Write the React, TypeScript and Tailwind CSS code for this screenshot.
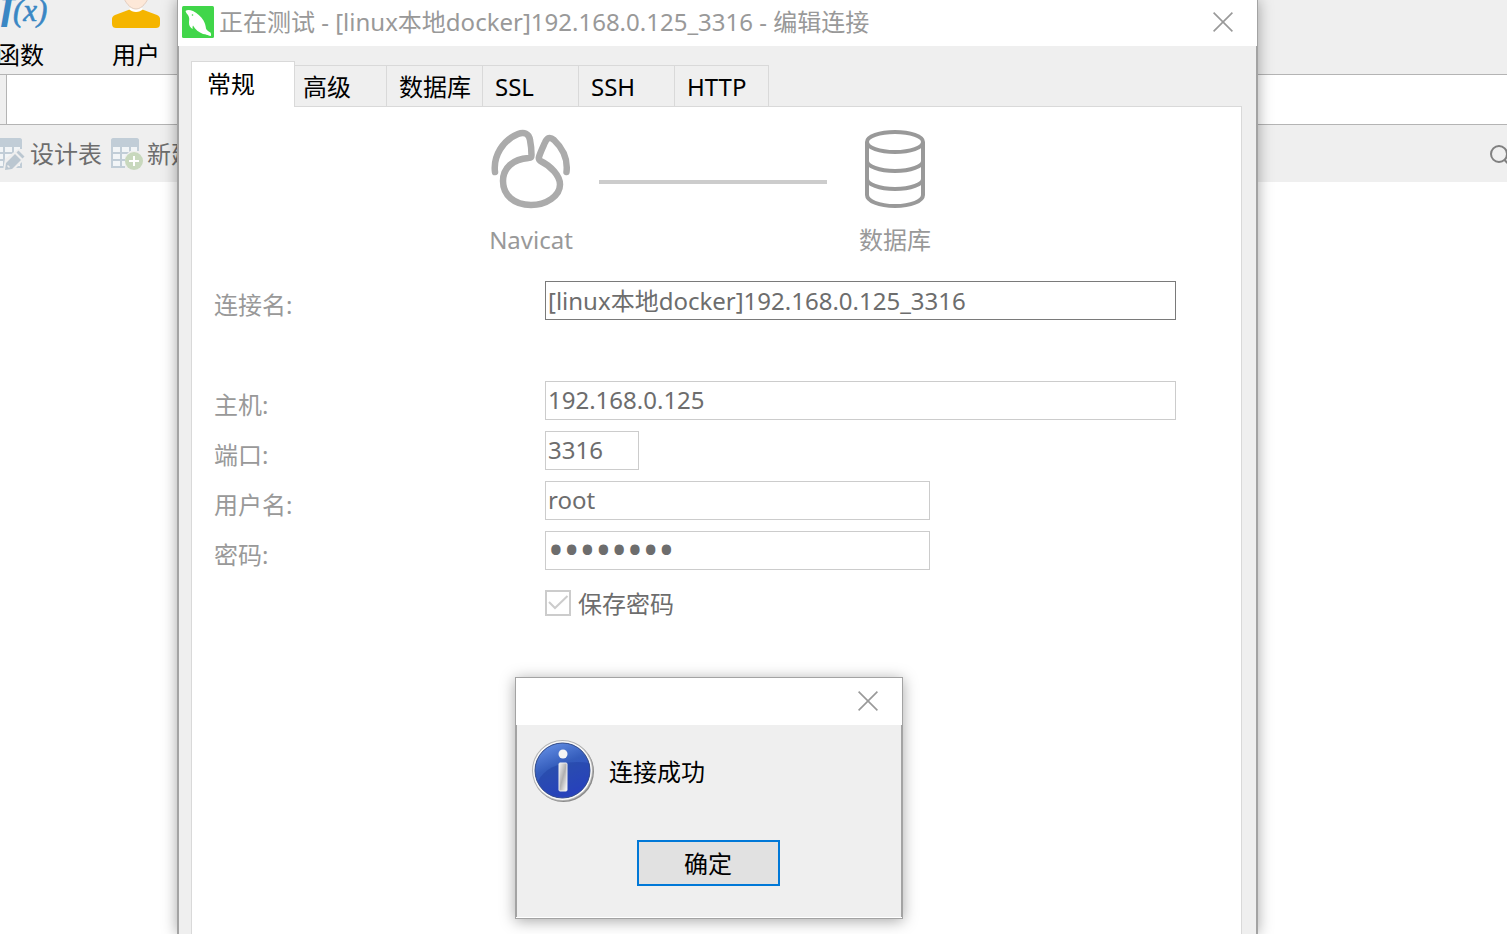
import { useState } from 'react';

interface Field {
  id: string;
  label: string;
  value: string;
  type?: 'text' | 'password';
  inputClass: string;
  rowClass?: string;
}

const TABS = [
  { name: '高级', width: 'w-24' },
  { name: '数据库', width: 'w-24' },
  { name: 'SSL', width: 'w-24' },
  { name: 'SSH', width: 'w-24' },
  { name: 'HTTP', width: 'w-[94px]' },
];

const FIELDS: Field[] = [
  { id: 'name', label: '连接名:', value: '[linux本地docker]192.168.0.125_3316', inputClass: 'flex-1 border-[#7a7a7a]', rowClass: 'mb-[50px]' },
  { id: 'host', label: '主机:', value: '192.168.0.125', inputClass: 'flex-1 border-[#cccccc]' },
  { id: 'port', label: '端口:', value: '3316', inputClass: 'w-[94px] border-[#cccccc]' },
  { id: 'user', label: '用户名:', value: 'root', inputClass: 'w-[385px] border-[#cccccc]' },
  { id: 'password', label: '密码:', value: 'password', type: 'password', inputClass: 'w-[385px] border-[#cccccc] text-[42px]' },
];

function CloseIcon() {
  return (
    <svg className="h-5 w-5" viewBox="0 0 20 20" fill="none" stroke="#999999" strokeWidth="1.6">
      <path d="M.6.6l18.8 18.8M19.4.6L.6 19.4" />
    </svg>
  );
}

function AppLogo() {
  return (
    <svg className="h-8 w-8 shrink-0" viewBox="0 0 32 32">
      <rect width="32" height="32" rx="1.5" fill="#41d64a" />
      <path d="M3.500 5C5 3.500 8 3.800 11 5c4 2 8 5.500 10.500 9.500 1.500 2.500 2 5 2.500 8 .6 1.700 2.500 3 4.500 4 .3.800.3 2-.3 3-2.200-.8-4.700-1.200-7.200-1.500-4-1.500-8-4.500-10-8.500-.5 1-.6 2.200-.2 3.500C8.500 22 6.800 19.500 7 16.500c0-1.500.3-2.500.2-4-.2-2-1-3.500-2.200-4.500-.6-1-1.200-2-1.500-3z" fill="#fff" />
      <path d="M21 26.500l8 1v2.500c-3-.4-5.500-1.500-8-3.500z" fill="#fff" />
      <circle cx="10.500" cy="9" r=".8" fill="#41d64a" />
    </svg>
  );
}

function FunctionIcon() {
  return (
    <svg className="h-[30px] w-12 overflow-visible" viewBox="0 0 48 30" fill="#3a87c4" fontFamily="'Liberation Serif', serif" fontStyle="italic">
      <text x="5" y="18" fontSize="44" fontWeight="bold">f</text>
      <text x="17" y="21" fontSize="31" stroke="#3a87c4" strokeWidth=".6">(x)</text>
    </svg>
  );
}

function UserIcon() {
  return (
    <svg className="h-[30px] w-12 overflow-visible" viewBox="0 0 48 30">
      <path d="M0 24v-5c0-2 1-3 3-4L19 9h10l16 6c2 1 3 2 3 4v5c0 3-2 4-4 4H4c-2 0-4-1-4-4z" fill="#f5b500" />
      <path d="M17 9c3 4 11 4 14 0l-2-2H19z" fill="#fff" />
      <path d="M11-4c2 6 7 13 13 13S35 2 37-4z" fill="#fde8d8" stroke="#e2cdbf" />
    </svg>
  );
}

function TableIcon({ children }: { children: React.ReactNode }) {
  return (
    <svg className="h-8 w-8 shrink-0" viewBox="0 0 32 32">
      <path d="M0 30V2c0-1 1-2 2-2h24c1 0 2 1 2 2v28z" fill="#c1cdd7" />
      <path d="M2 9h7v5H2zM11 9h7v5h-7zM20 9h6v5h-6zM2 16h7v5H2zM11 16h7v5h-7zM20 16h6v5h-6zM2 23h7v5H2zM11 23h7v5h-7zM20 23h6v5h-6z" fill="#f2f5f7" />
      {children}
    </svg>
  );
}

function DesignTableIcon() {
  return (
    <TableIcon>
      <path d="M9 32l2-11L24 11h8v9L20 32z" fill="#efefef" />
      <path d="M11 32l1-7 9-9 6 6-9 9zM22.500 14.500l2-2 6 6-2 2z" fill="#bbc7d1" />
      <path d="M13.500 27.500l2 2" stroke="#efefef" strokeWidth="1.500" />
    </TableIcon>
  );
}

function NewTableIcon() {
  return (
    <TableIcon>
      <path d="M14 31V18l5-5h10v18z" fill="#efefef" />
      <circle cx="23" cy="23" r="9" fill="#c8d8bd" />
      <path d="M18 23h10M23 18v10" stroke="#fff" strokeWidth="2" />
    </TableIcon>
  );
}

function NavicatIcon() {
  return (
    <svg className="h-20 w-20 overflow-visible" viewBox="0 0 80 80" fill="none" stroke="#ababab" strokeWidth="6.500" strokeLinecap="round" strokeLinejoin="round">
      <path d="M4 43C2 27 12 11 27 5c6-2.500 11-.5 12 6 1 5 1.500 10 1.500 15 0 2-.5 3-3 3C22 30 12 39 12 52c0 14 11 24 28 24 15 0 29-9 29-20.500C69 47 60 37 49.500 32c-1.500-1-2-2-1.500-4 1.500-5 3.500-9 6-14.500 2-5 5-6 9-2.500 8.500 8 14 19 12.500 32" />
    </svg>
  );
}

function DatabaseIcon() {
  return (
    <svg className="h-20 w-[60px]" viewBox="0 0 60 80" fill="none" stroke="#999999" strokeWidth="4">
      <ellipse cx="30" cy="13" rx="28" ry="10" />
      <path d="M2 13v53c0 6 12 11 28 11s28-5 28-11V13M2 32c0 5 12 10 28 10s28-5 28-10M2 50c0 5 12 10 28 10s28-5 28-10" />
    </svg>
  );
}

function InfoIcon() {
  return (
    <svg className="h-16 w-16 shrink-0" viewBox="0 0 64 64">
      <defs>
        <linearGradient id="info-fill" x1="0" y1="0" x2="0.400" y2="1">
          <stop offset="0" stopColor="#6c98ec" />
          <stop offset="0.500" stopColor="#345cbb" />
          <stop offset="1" stopColor="#2f48d0" />
        </linearGradient>
        <linearGradient id="info-stem" x1="0" y1="0" x2="1" y2="1">
          <stop offset="0" stopColor="#f5f5f5" />
          <stop offset="0.500" stopColor="#b0b0b0" />
          <stop offset="1" stopColor="#ffffff" />
        </linearGradient>
      </defs>
      <circle cx="32.500" cy="32.500" r="30.500" fill="#8a8a8a" />
      <circle cx="31.500" cy="31.500" r="30.500" fill="#b5b5b5" />
      <circle cx="31.500" cy="31.500" r="29.500" fill="#fafafa" />
      <circle cx="31.500" cy="31.500" r="27.500" fill="url(#info-fill)" stroke="#324a87" />
      <path d="M7 42C14 27 37 20 58.500 24c3 20-9 34-27 34C19 58 11 52 7 42z" fill="#1c3a9c" opacity=".4" />
      <circle cx="32" cy="15" r="4.500" fill="#f4f4f4" />
      <rect x="28" y="24" width="8" height="28" rx="1" fill="url(#info-stem)" stroke="#eeeeee" />
    </svg>
  );
}

function MainWindow() {
  return (
    <main className="h-full">
      <div className="flex h-[75px] gap-[68px] overflow-hidden border-b border-[#b4b4b4] bg-[#efefef]">
        <button className="-ml-1 flex w-12 shrink-0 flex-col items-center">
          <FunctionIcon />
          <span className="mt-[9px] leading-8">函数</span>
        </button>
        <button className="flex w-12 shrink-0 flex-col items-center">
          <UserIcon />
          <span className="mt-[9px] leading-8">用户</span>
        </button>
      </div>
      <div className="h-[50px] border-b border-[#b4b4b4] bg-[#efefef] pl-1.5">
        <div className="h-full border-l border-[#b4b4b4] bg-white" />
      </div>
      <div className="flex h-[57px] items-center overflow-hidden bg-[#efefef] text-[#6d6d6d]">
        <button className="-ml-[6px] flex shrink-0 items-center gap-1">
          <DesignTableIcon />
          设计表
        </button>
        <button className="ml-[9px] flex shrink-0 items-center gap-1">
          <NewTableIcon />
          新建表
        </button>
        <button className="-mr-1.5 ml-auto shrink-0" aria-label="搜索">
          <svg className="h-6 w-6" viewBox="0 0 24 24" fill="none" stroke="#808080" strokeWidth="2">
            <circle cx="10" cy="12" r="8" />
            <path d="M15.500 18l6 6" />
          </svg>
        </button>
      </div>
    </main>
  );
}

function EditConnectionWindow() {
  const [save, setSave] = useState(true);

  return (
    <section className="absolute top-0 right-[249px] bottom-0 left-[177px] flex flex-col border-x border-[#a3a3a3] shadow-[0_0_14px_rgba(0,0,0,0.35)]">
      <header className="flex h-[46px] shrink-0 items-center bg-white pr-6 pb-0.5 pl-1 text-[#999999]">
        <AppLogo />
        <h1 className="ml-[5px] flex-1 whitespace-nowrap">正在测试 - [linux本地docker]192.168.0.125_3316 - 编辑连接</h1>
        <button aria-label="关闭">
          <CloseIcon />
        </button>
      </header>

      <div className="flex flex-1 flex-col border-x border-[#a3a3a3] bg-[#efefef] pt-[15px] pr-[14px] pl-3">
        <div role="tablist" className="relative z-10 -mb-px flex items-end">
          <button role="tab" aria-selected="true" className="z-10 -mr-1 h-[46px] w-[104px] border border-b-0 border-[#d9d9d9] bg-white pb-0.5 pl-[15px] text-left">
            常规
          </button>
          {TABS.map(tab => (
            <button key={tab.name} role="tab" aria-selected="false" className={`h-[42px] border-y border-r border-[#d9d9d9] pt-0.5 pl-3 text-left ${tab.width}`}>
              {tab.name}
            </button>
          ))}
        </div>

        <div role="tabpanel" className="flex-1 border border-b-0 border-[#d9d9d9] bg-white pr-[65px] pl-[22px]">
          <div className="ml-[271px] flex pt-[22px] text-[#999999]">
            <figure className="flex w-[92px] flex-col items-center">
              <NavicatIcon />
              <figcaption className="mt-[13px] leading-9">Navicat</figcaption>
            </figure>
            <hr className="mx-[22px] mt-[51px] w-[228px] border-0 border-t-4 border-[#cccccc]" />
            <figure className="flex w-[92px] flex-col items-center">
              <DatabaseIcon />
              <figcaption className="mt-[13px] leading-9">数据库</figcaption>
            </figure>
          </div>

          <form className="mt-[23px]">
            {FIELDS.map(f => (
              <div key={f.id} className={`flex h-[50px] items-start ${f.rowClass ?? ''}`}>
                <label htmlFor={f.id} className="w-[331px] shrink-0 pt-1.5 leading-9 text-[#999999]">
                  {f.label}
                </label>
                <input
                  id={f.id}
                  type={f.type ?? 'text'}
                  defaultValue={f.value}
                  className={`h-[39px] min-w-0 border bg-white px-0.5 pb-[3px] text-[#6d6d6d] outline-none ${f.inputClass}`}
                />
              </div>
            ))}
            <label className="ml-[331px] flex items-start gap-[7px] pt-[9px] text-[#6d6d6d]">
              <span className="grid h-[26px] w-[26px]">
                <input
                  type="checkbox"
                  checked={save}
                  onChange={() => setSave(!save)}
                  className="col-start-1 row-start-1 appearance-none border-2 border-[#cccccc]"
                />
                {save && (
                  <svg className="pointer-events-none col-start-1 row-start-1" viewBox="0 0 26 26" fill="none" stroke="#cccccc" strokeWidth="2">
                    <path d="M4 12l6 6L22.500 6" />
                  </svg>
                )}
              </span>
              <span className="leading-7">保存密码</span>
            </label>
          </form>
        </div>
      </div>
    </section>
  );
}

function SuccessDialog() {
  return (
    <div role="dialog" aria-label="连接成功" className="absolute top-[677px] left-[515px] w-[388px] border border-[#a3a3a3] bg-white pb-px shadow-[0_2px_14px_rgba(0,0,0,0.35)]">
      <div className="flex h-[47px] items-center justify-end pr-6 pb-0.5">
        <button aria-label="关闭">
          <CloseIcon />
        </button>
      </div>
      <div className="border-x border-[#a3a3a3] bg-[#efefef] pt-[14px] pr-0.5 pb-[31px]">
        <div className="flex items-center gap-[14px] pl-[14px]">
          <InfoIcon />
          <p className="pt-0.5">连接成功</p>
        </div>
        <button className="mx-auto mt-[37px] block h-[46px] w-[143px] border-2 border-[#0078d7] bg-[#e1e1e1] pt-px">确定</button>
      </div>
    </div>
  );
}

export default function App() {
  return (
    <div className="relative h-screen overflow-hidden bg-white font-['Noto_Sans','Noto_Sans_CJK_SC',sans-serif] text-2xl text-black">
      <MainWindow />
      <EditConnectionWindow />
      <SuccessDialog />
    </div>
  );
}
